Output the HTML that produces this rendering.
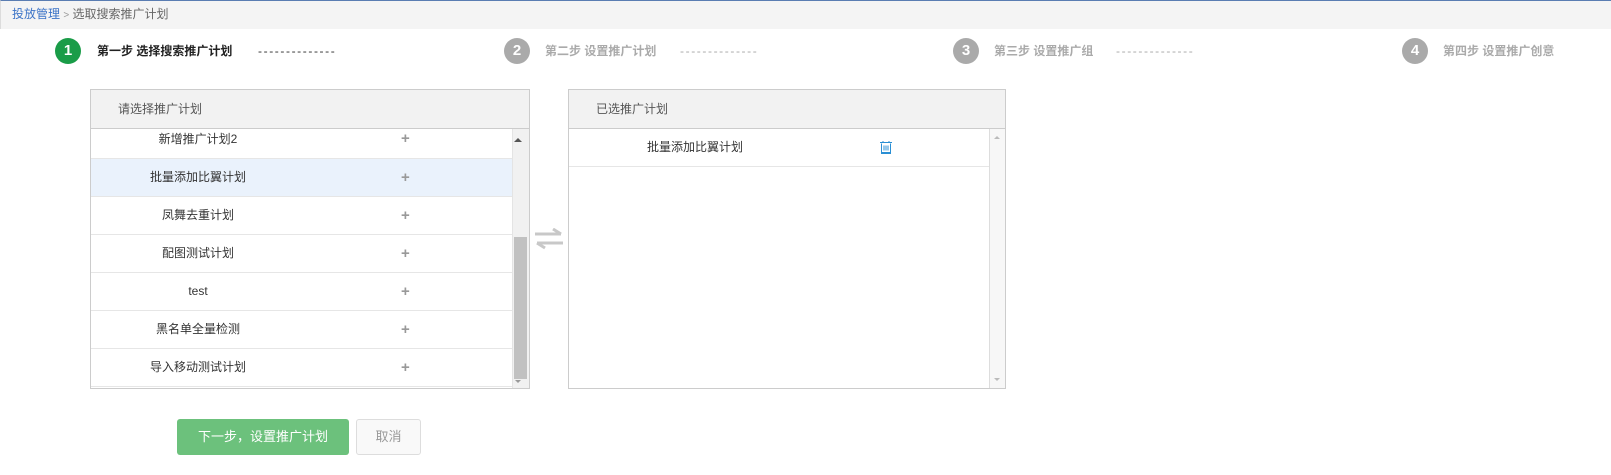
<!DOCTYPE html>
<html><head><meta charset="utf-8"><style>
*{margin:0;padding:0;box-sizing:border-box}
body{width:1611px;height:475px;background:#fff;font-family:"Liberation Sans","Noto Sans CJK SC",sans-serif;font-size:12px;color:#333;position:relative;overflow:hidden}
.abs{position:absolute}
.bc{left:0;top:0;width:1611px;height:29px;background:#f4f4f4;border-top:1px solid #5a7db2;border-left:1px solid #dcdcdc;line-height:27px;padding-left:11px;color:#666}
.bc a{color:#3b73c7}
.circ{width:26px;height:26px;border-radius:50%;color:#fff;font-weight:bold;font-size:15px;text-align:center;line-height:26px;top:38px;background:#aaa}
.st{top:43px;font-size:12px;font-weight:bold;color:#aaa;line-height:16px}
.dash{top:43px;color:#aaa;line-height:16px;letter-spacing:1.6px}
.panel{top:89px;height:300px;border:1px solid #ccc;background:#fff;overflow:hidden}
.hd{height:39px;background:#f2f2f2;border-bottom:1px solid #ccc;line-height:38px;padding-left:27px;color:#555}
.row{position:absolute;left:0;height:38px;border-bottom:1px solid #e6e6e6;line-height:37px}
.row .t{position:absolute;left:0;width:214px;text-align:center}
.row .p{position:absolute;left:310px;color:#999;font-weight:bold;font-size:15px}
</style></head><body>
<div class="abs bc"><a>投放管理</a> <span style="font-size:10px;color:#999">&gt;</span> 选取搜索推广计划</div>

<div class="abs circ" style="left:55px;background:#1a9c48">1</div>
<div class="abs st" style="left:97px;color:#222">第一步 选择搜索推广计划</div>
<div class="abs dash" style="left:258px;color:#333">--------------</div>
<div class="abs circ" style="left:504px">2</div>
<div class="abs st" style="left:545px">第二步 设置推广计划</div>
<div class="abs dash" style="left:680px">--------------</div>
<div class="abs circ" style="left:953px">3</div>
<div class="abs st" style="left:994px">第三步 设置推广组</div>
<div class="abs dash" style="left:1116px">--------------</div>
<div class="abs circ" style="left:1402px">4</div>
<div class="abs st" style="left:1443px">第四步 设置推广创意</div>

<div class="abs panel" style="left:90px;width:440px">
 <div class="hd">请选择推广计划</div>
 <div class="row" style="top:38px;width:422px;height:31px;line-height:22px"><span class="t">新增推广计划2</span><span class="p">+</span></div>
 <div class="row" style="top:69px;width:422px;background:#eaf2fc"><span class="t">批量添加比翼计划</span><span class="p">+</span></div>
 <div class="row" style="top:107px;width:422px"><span class="t">凤舞去重计划</span><span class="p">+</span></div>
 <div class="row" style="top:145px;width:422px"><span class="t">配图测试计划</span><span class="p">+</span></div>
 <div class="row" style="top:183px;width:422px"><span class="t">test</span><span class="p">+</span></div>
 <div class="row" style="top:221px;width:422px"><span class="t">黑名单全量检测</span><span class="p">+</span></div>
 <div class="row" style="top:259px;width:422px"><span class="t">导入移动测试计划</span><span class="p">+</span></div>
 <div class="abs" style="left:421px;top:39px;width:17px;height:260px;background:#f1f1f1;border-left:1px solid #e4e4e4"></div>
 <div class="abs" style="left:423px;top:48px;width:0;height:0;border:4px solid transparent;border-bottom:4px solid #555;border-top:0"></div>
 <div class="abs" style="left:423px;top:147px;width:13px;height:142px;background:#c1c1c1"></div>
 <div class="abs" style="left:424px;top:290px;width:0;height:0;border:3px solid transparent;border-top:3px solid #999;border-bottom:0"></div>
</div>

<svg class="abs" style="left:533px;top:228px" width="32" height="22" viewBox="0 0 32 22"><path d="M2 6h26M20 1l8 5" stroke="#c8c8c8" stroke-width="3" fill="none"/><path d="M30 15H4M12 20l-8-5" stroke="#c8c8c8" stroke-width="3" fill="none"/></svg>

<div class="abs panel" style="left:568px;width:438px">
 <div class="hd">已选推广计划</div>
 <div class="row" style="top:39px;width:421px;line-height:36px"><span class="t" style="left:0;width:252px">批量添加比翼计划</span>
  <svg class="abs" style="left:311px;top:12px" width="12" height="13" viewBox="0 0 12 13"><path d="M0 1.5h12M3 0v2M9 0v2M1.5 2.5v9h9v-9M4 4.5v5M6 4.5v5M8 4.5v5M1 12.5h10" stroke="#2a8fd4" stroke-width="1" fill="none"/></svg></div>
 <div class="abs" style="left:420px;top:39px;width:17px;height:260px;background:#f7f7f7;border-left:1px solid #ddd"></div>
 <div class="abs" style="left:425px;top:46px;width:0;height:0;border:3px solid transparent;border-bottom:3px solid #bbb;border-top:0"></div>
 <div class="abs" style="left:425px;top:288px;width:0;height:0;border:3px solid transparent;border-top:3px solid #bbb;border-bottom:0"></div>
</div>

<div class="abs" style="left:177px;top:419px;width:172px;height:36px;background:#6cc17c;border-radius:3px;color:#fff;text-align:center;line-height:36px;font-size:13px">下一步，设置推广计划</div>
<div class="abs" style="left:356px;top:419px;width:65px;height:36px;background:#f9f9f9;border:1px solid #ddd;border-radius:3px;color:#999;text-align:center;line-height:34px;font-size:13px">取消</div>
</body></html>
